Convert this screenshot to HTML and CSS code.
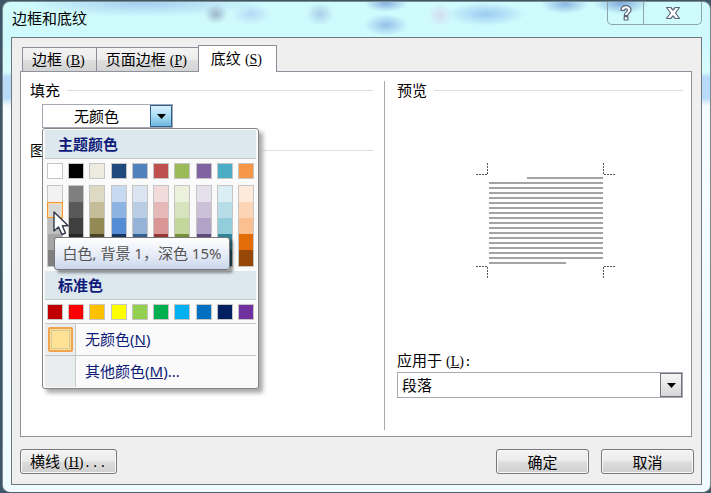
FILE: index.html
```html
<!DOCTYPE html>
<html lang="zh-CN">
<head>
<meta charset="utf-8">
<title>边框和底纹</title>
<link rel="stylesheet" href="styles.css">
</head>
<body>
<main class="window">
  <header class="titlebar">
    <h1>边框和底纹</h1>
    <div class="window-buttons">
      <button class="help" aria-label="帮助"><svg width="12" height="16" viewBox="0 0 12 16"><path d="M1 5.400C1 -0.800 11 -0.800 11 5C11 8 7.800 8 7.800 10.500H4.300C4.300 7 7.500 7 7.500 5.200C7.500 3.400 4.500 3.400 4.500 5.400ZM4.200 11.700H7.900V15H4.200Z" fill="#fff" stroke="#5b6676" stroke-width="1.200" stroke-linejoin="round"/></svg></button>
      <button class="close" aria-label="关闭"><svg width="16" height="14" viewBox="0 0 16 14"><path d="M1.5 1.5H5.8L8 4.2L10.2 1.5H14.5L10.5 7L14.5 12.5H10.2L8 9.8L5.8 12.5H1.5L5.5 7Z" fill="#fff" stroke="#5b6676" stroke-width="1.2" stroke-linejoin="round"/></svg></button>
    </div>
  </header>
  <div class="client">
    <div class="tabs" role="tablist">
      <button class="tab" role="tab">边框<span class="key">(<u>B</u>)</span></button>
      <button class="tab" role="tab">页面边框<span class="key">(<u>P</u>)</span></button>
      <button class="tab active" role="tab" aria-selected="true">底纹<span class="key">(<u>S</u>)</span></button>
    </div>
    <section class="panel">
      <div class="left">
        <h2 class="legend"><label for="fill">填充</label></h2>
        <div class="picker">
          <div class="combo fill-combo">
            <select id="fill"><option>无颜色</option></select>
            <span class="arrow hot"><svg width="9" height="5" viewBox="0 0 9 5"><path d="M0 0H9L4.5 5Z"/></svg></span>
          </div>
          <div class="popup">
            <h3>主题颜色</h3>
            <div class="swatches theme">
              <button class="swatch c-white" aria-label="白色"></button><button class="swatch c-black" aria-label="黑色"></button><button class="swatch c-cream" aria-label="茶色"></button><button class="swatch c-navy" aria-label="深蓝"></button><button class="swatch c-blue" aria-label="蓝色"></button><button class="swatch c-red" aria-label="红色"></button><button class="swatch c-olive" aria-label="橄榄色"></button><button class="swatch c-purple" aria-label="紫色"></button><button class="swatch c-aqua" aria-label="水绿色"></button><button class="swatch c-orange" aria-label="橙色"></button>
            </div>
            <div class="swatches shades">
              <div class="shade s-white"><i></i><i class="picked"></i><i></i><i></i><i></i></div>
              <div class="shade s-black"><i></i><i></i><i></i><i></i><i></i></div>
              <div class="shade s-cream"><i></i><i></i><i></i><i></i><i></i></div>
              <div class="shade s-navy"><i></i><i></i><i></i><i></i><i></i></div>
              <div class="shade s-blue"><i></i><i></i><i></i><i></i><i></i></div>
              <div class="shade s-red"><i></i><i></i><i></i><i></i><i></i></div>
              <div class="shade s-olive"><i></i><i></i><i></i><i></i><i></i></div>
              <div class="shade s-purple"><i></i><i></i><i></i><i></i><i></i></div>
              <div class="shade s-aqua"><i></i><i></i><i></i><i></i><i></i></div>
              <div class="shade s-orange"><i></i><i></i><i></i><i></i><i></i></div>
            </div>
            <h3>标准色</h3>
            <div class="swatches standard">
              <button class="swatch d-darkred" aria-label="深红"></button><button class="swatch d-red" aria-label="红色"></button><button class="swatch d-gold" aria-label="橙色"></button><button class="swatch d-yellow" aria-label="黄色"></button><button class="swatch d-lime" aria-label="浅绿"></button><button class="swatch d-green" aria-label="绿色"></button><button class="swatch d-sky" aria-label="浅蓝"></button><button class="swatch d-blue" aria-label="蓝色"></button><button class="swatch d-navy" aria-label="深蓝"></button><button class="swatch d-purple" aria-label="紫色"></button>
            </div>
            <button class="item"><span class="gutter"><span class="chosen"></span></span><span class="text">无颜色(<u>N</u>)</span></button>
            <button class="item"><span class="gutter"></span><span class="text">其他颜色(<u>M</u>)...</span></button>
            <div class="tooltip" role="tooltip">白色, 背景 1，深色 15%</div>
            <svg class="cursor" width="17" height="25" viewBox="0 0 17 25"><path d="M1 1V20L5.5 16L9 23.5L12.5 22L9.3 14.8H15.2Z" fill="#fff" stroke="#34384c" stroke-width="1.4" stroke-linejoin="round"/></svg>
          </div>
        </div>
        <h2 class="legend">图案</h2>
      </div>
      <div class="right">
        <h2 class="legend">预览</h2>
        <div class="preview">
          <svg width="140" height="116" viewBox="0 0 140 116">
            <g fill="none" stroke="#555" stroke-width="1" stroke-dasharray="2 1"><path d="M1 11.5H12.5V0M140 11.5H128.5V0M1 103.500H12.500V115M140 103.500H128.500V115"/></g>
            <g stroke="#a3a3a3" stroke-width="2"><path d="M52 15H128M14 20H128M14 25H128M14 30H128M14 35H128M14 40H128M14 45H128M14 50H128M14 55H128M14 60H128M14 65H128M14 70H128M14 75H128M14 80H128M14 85H128M14 90H128M14 95H128M14 100H91"/></g>
          </svg>
        </div>
        <label class="apply" for="apply">应用于<span class="key">(<u>L</u>)</span><span class="mono">:</span></label>
        <div class="combo">
          <select id="apply"><option>段落</option></select>
          <span class="arrow"><svg width="9" height="5" viewBox="0 0 9 5"><path d="M0 0H9L4.5 5Z"/></svg></span>
        </div>
      </div>
    </section>
    <footer class="actions">
      <button class="push">横线<span class="key">(<u>H</u>)</span><span class="mono">...</span></button>
      <button class="push ok">确定</button>
      <button class="push">取消</button>
    </footer>
  </div>
</main>
</body>
</html>
```
FILE: styles.css
```css
* { box-sizing: border-box; }
body {
  margin: 0;
  background: #3f5668;
  color: #000;
  font: 15px/20px "Noto Sans", "Noto Sans CJK SC", sans-serif;
}
button, select { font: inherit; color: inherit; margin: 0; padding: 0; }
h1, h2, h3 { margin: 0; font: inherit; }
.key { margin-left: 4px; font-family: "Liberation Serif", serif; font-size: 14px; }
.mono { font-family: "Liberation Mono", monospace; font-size: 13px; }

.window {
  display: flex;
  flex-direction: column;
  min-height: 492px;
  min-height: calc(100vh - 1px);
  margin: 1px 0 0 2px;
  padding: 0 8px 7px 8px;
  border: 1px solid #7c8b8e;
  border-bottom-color: #4d5f6a;
  border-radius: 8px;
  background:
    radial-gradient(ellipse 12px 10px at 213px 12px, #9fb6cc, transparent),
    radial-gradient(ellipse 20px 11px at 248px 12px, #b4daf6, transparent),
    radial-gradient(ellipse 14px 12px at 317px 12px, #a9d0ea, transparent),
    radial-gradient(ellipse 22px 9px at 383px 1px, #86afe0, transparent),
    radial-gradient(ellipse 22px 11px at 383px 23px, #94c0ea, transparent),
    radial-gradient(ellipse 12px 12px at 437px 13px, #d5dcf0, transparent),
    radial-gradient(ellipse 40px 12px at 483px 12px, #9ccbf1, transparent),
    radial-gradient(ellipse 24px 10px at 562px 2px, #8ab6e2, transparent),
    radial-gradient(ellipse 28px 11px at 618px 1px, #7eabdd, transparent),
    radial-gradient(ellipse 120px 14px at 140px 1px, #a6cdf0, transparent),
    linear-gradient(#d0fbfd, #cefafd 36px, #d8fbfd 70px, #b9dbfa 75px, #b9dbfa 96px, #f5fdff 104px, #f0fbff);
}
.titlebar {
  display: flex;
  justify-content: space-between;
  align-items: flex-start;
  height: 35px;
  padding-left: 1px;
}
h1 { line-height: 32px; }
.window-buttons { display: flex; border: 1px solid #8ba5a8; border-top: 0; border-radius: 0 0 5px 5px; }
.window-buttons button {
  display: grid;
  place-items: center;
  width: 35px;
  height: 22px;
  border: 0;
  background: none;
}
.window-buttons .close { width: 58px; border-left: 1px solid #8ba5a8; }

.client {
  flex: 1;
  display: flex;
  flex-direction: column;
  padding: 7px 9px 10px 8px;
  border: 1px solid #70777b;
  background: #efefef;
}
.tabs { display: flex; align-items: flex-end; padding-left: 2px; }
.tab {
  height: 24px;
  padding: 0 11px 0 9px;
  margin-right: -1px;
  border: 1px solid #8b8e98;
  border-bottom: 0;
  background: linear-gradient(#f4f4f4, #ececec 50%, #dedede 55%, #d4d4d4);
  white-space: nowrap;
}
.tab.active { height: 27px; padding: 0 14px 0 12px; background: #fff; margin-bottom: -1px; z-index: 1; }
.panel {
  flex: 1;
  display: grid;
  grid-template-columns: 364fr 306fr;
  padding: 9px 0 6px;
  border: 1px solid #8f929c;
  background: #fff;
}
.left { display: flex; flex-direction: column; padding: 0 11px 0 9px; border-right: 1px solid #a9a9a9; }
.right { display: flex; flex-direction: column; padding: 0 8px 32px 12px; }
.legend { display: flex; align-items: center; gap: 7px; height: 18px; white-space: nowrap; }
.legend::after { content: ""; flex: 1; height: 1px; background: #d7dfe6; }

.picker { position: relative; margin: 5px 0 13px 12px; }
.combo { display: grid; grid-template: 24px / 1fr; border: 1px solid #a6a8b4; }
.combo select {
  grid-area: 1 / 1;
  width: 100%;
  padding: 0 4px;
  appearance: none;
  border: 0;
  background: #fff;
}
.fill-combo { width: 131px; grid-template-rows: 22px; }
.fill-combo select { padding: 0 31px; }
.arrow {
  grid-area: 1 / 1;
  justify-self: end;
  display: grid;
  place-items: center;
  width: 22px;
  border: 1px solid #70737a;
  background: linear-gradient(#f5f5f5, #e8e8e8 50%, #d5d5d5);
  pointer-events: none;
}
.arrow.hot { border-color: #2c628b; background: linear-gradient(#d9f1fc, #a9dcf4 50%, #6db6dc); }

.popup {
  position: absolute;
  left: 0;
  top: 100%;
  z-index: 2;
  width: 217px;
  padding: 1px 2px;
  border: 1px solid #858585;
  border-radius: 3px;
  background: #fafafa;
  box-shadow: 4px 4px 4px #aaa;
  color: #0d1a78;
}
.popup h3 {
  height: 29px;
  padding-left: 13px;
  border-bottom: 1px solid #c5c9cc;
  background: #dde7ee;
  font-weight: bold;
  line-height: 28px;
}
.swatches { display: flex; justify-content: space-between; padding: 4px 2px 3px; }
.theme { padding-bottom: 6px; }
.shades { padding-top: 0; padding-bottom: 4px; }
.swatch { width: 16px; height: 16px; border: 1px solid #c5c5c5; }
.shade { width: 16px; border: 1px solid #c5c5c5; }
.shade i { display: block; height: 16px; }
.shade .picked { margin: 0 -1px; border: 1px solid #f29436; box-shadow: inset 0 0 0 1px #fbdca0; }
.item {
  display: flex;
  align-items: stretch;
  width: 100%;
  height: 32px;
  border: 0;
  border-top: 1px solid #c5c5c5;
  background: none;
  text-align: left;
}
.gutter { display: grid; place-items: center; width: 31px; border-right: 1px solid #c8cccc; background: #e9eded; }
.item .text { padding-left: 9px; line-height: 30px; }
.chosen { width: 25px; height: 25px; border: 2px solid #f2a34f; border-radius: 2px; background: #ffe294; box-shadow: inset 0 0 0 1px #ffe294, inset 0 0 0 2px #d3c7a0; }
.tooltip {
  position: absolute;
  left: 11px;
  top: 108px;
  width: 176px;
  height: 33px;
  border: 1px solid #767676;
  border-radius: 3px;
  background: linear-gradient(#fff, #e3e9f5 60%, #cbd7ed);
  box-shadow: 3px 3px 3px rgba(0, 0, 0, .4);
  color: #555;
  line-height: 31px;
  text-align: center;
  white-space: nowrap;
}
.cursor { position: absolute; left: 10px; top: 82px; }

.preview { flex: 1; display: grid; place-items: center; padding: 0 0 6px 9px; }
.apply { height: 24px; line-height: 24px; }
.actions { display: flex; align-items: center; gap: 12px; margin-top: 12px; margin-right: -2px; }
.push {
  width: 93px;
  height: 25px;
  border: 1px solid #76787a;
  border-radius: 3px;
  background: linear-gradient(#f4f4f4, #ebebeb 48%, #dddddd 52%, #cfcfcf);
  box-shadow: inset 0 0 0 1px #fafafa;
  line-height: 22px;
  white-space: nowrap;
}
.push:first-child { width: 97px; text-align: left; padding-left: 9px; }
.ok { margin-left: auto; }

.c-white { background: #fff; }
.c-black { background: #000; }
.c-cream { background: #eeece1; }
.c-navy { background: #1f497d; }
.c-blue { background: #4f81bd; }
.c-red { background: #c0504d; }
.c-olive { background: #9bbb59; }
.c-purple { background: #8064a2; }
.c-aqua { background: #4bacc6; }
.c-orange { background: #f79646; }
.s-white { background: linear-gradient(#f2f2f2 20%, #d8d8d8 20% 40%, #bfbfbf 40% 60%, #a5a5a5 60% 80%, #7f7f7f 80%); }
.s-black { background: linear-gradient(#7f7f7f 20%, #595959 20% 40%, #3f3f3f 40% 60%, #262626 60% 80%, #0c0c0c 80%); }
.s-cream { background: linear-gradient(#ddd9c3 20%, #c4bd97 20% 40%, #938953 40% 60%, #494429 60% 80%, #1d1b10 80%); }
.s-navy { background: linear-gradient(#c6d9f0 20%, #8db3e2 20% 40%, #548dd4 40% 60%, #17365d 60% 80%, #0f243e 80%); }
.s-blue { background: linear-gradient(#dbe5f1 20%, #b8cce4 20% 40%, #95b3d7 40% 60%, #366092 60% 80%, #244061 80%); }
.s-red { background: linear-gradient(#f2dcdb 20%, #e5b9b7 20% 40%, #d99694 40% 60%, #953734 60% 80%, #632423 80%); }
.s-olive { background: linear-gradient(#ebf1dd 20%, #d7e3bc 20% 40%, #c3d69b 40% 60%, #76923c 60% 80%, #4f6128 80%); }
.s-purple { background: linear-gradient(#e5e0ec 20%, #ccc1d9 20% 40%, #b2a2c7 40% 60%, #5f497a 60% 80%, #3f3151 80%); }
.s-aqua { background: linear-gradient(#dbeef3 20%, #b7dde8 20% 40%, #92cddc 40% 60%, #31859b 60% 80%, #205867 80%); }
.s-orange { background: linear-gradient(#fdeada 20%, #fbd5b5 20% 40%, #fac08f 40% 60%, #e36c09 60% 80%, #974806 80%); }
.d-darkred { background: #c00000; }
.d-red { background: #f00; }
.d-gold { background: #ffc000; }
.d-yellow { background: #ff0; }
.d-lime { background: #92d050; }
.d-green { background: #00b050; }
.d-sky { background: #00b0f0; }
.d-blue { background: #0070c0; }
.d-navy { background: #002060; }
.d-purple { background: #7030a0; }
```
